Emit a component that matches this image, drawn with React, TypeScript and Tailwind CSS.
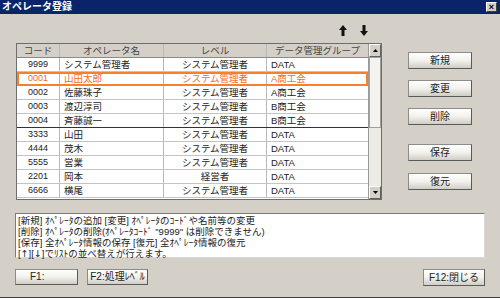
import React from "react";

type Row = { code: string; name: string; level: string; group: string };

const rows: Row[] = [
  { code: "9999", name: "システム管理者", level: "システム管理者", group: "DATA" },
  { code: "0001", name: "山田太郎", level: "システム管理者", group: "A商工会" },
  { code: "0002", name: "佐藤珠子", level: "システム管理者", group: "A商工会" },
  { code: "0003", name: "渡辺淳司", level: "システム管理者", group: "B商工会" },
  { code: "0004", name: "斉藤誠一", level: "システム管理者", group: "B商工会" },
  { code: "3333", name: "山田", level: "システム管理者", group: "DATA" },
  { code: "4444", name: "茂木", level: "システム管理者", group: "DATA" },
  { code: "5555", name: "営業", level: "システム管理者", group: "DATA" },
  { code: "2201", name: "岡本", level: "経営者", group: "DATA" },
  { code: "6666", name: "横尾", level: "システム管理者", group: "DATA" },
];

const font = {
  fontFamily: '"Liberation Sans", "Noto Sans CJK JP", sans-serif',
};

function Btn({ label, className = "" }: { label: string; className?: string }) {
  return (
    <div
      className={
        "flex items-center justify-center whitespace-nowrap leading-none border border-[#8c8c8c] border-b-[#5a5a5a] border-r-[#5a5a5a] bg-gradient-to-b from-white via-[#f2f1ec] to-[#cfcdc5] text-[10px] text-[#222] " +
        className
      }
    >
      {label}
    </div>
  );
}

function Arrow({ down = false }: { down?: boolean }) {
  return (
    <svg width="8" height="11" viewBox="0 0 8 11" className={down ? "rotate-180" : ""}>
      <path d="M4 0 L8 5 L5.5 5 L5.5 11 L2.5 11 L2.5 5 L0 5 Z" fill="#111" />
    </svg>
  );
}

function Cell({ w, align, children, className = "" }: { w: string; align: "c" | "l"; children: React.ReactNode; className?: string }) {
  return (
    <div
      className={
        w +
        " h-full flex items-center overflow-hidden whitespace-nowrap leading-none border-r border-[#b8b8b8] " +
        (align === "c" ? "justify-center" : "justify-start pl-[3px]") +
        " " +
        className
      }
    >
      {children}
    </div>
  );
}

export default function App() {
  return (
    <div className="w-[500px] h-[298px] bg-[#d4d0c8] flex flex-col border-b border-[#404040]" style={font}>
      {/* title bar */}
      <div className="h-[14px] bg-[#0a246a] flex items-center justify-between pl-[2px] pr-[3px]">
        <span className="text-white text-[10px] font-bold leading-none">オペレータ登録</span>
        <div className="w-[11px] h-[10px] bg-[#d4d0c8] border border-white border-b-[#404040] border-r-[#404040] flex items-center justify-center text-[9px] leading-none font-bold text-black">
          ×
        </div>
      </div>

      {/* arrows */}
      <div className="h-[29px] flex items-center gap-[13px] pl-[339px] pt-[3px]">
        <Arrow />
        <Arrow down />
      </div>

      <div className="flex">
        {/* table */}
        <div className="ml-[16px] w-[366px] h-[157px] border border-[#6e6e6e] bg-white flex text-[9.5px] text-[#222]">
          <div className="flex-1 flex flex-col">
            <div className="h-[14px] flex bg-[#d4d0c8] border-b border-[#8a8a8a] text-[#444]">
              <Cell w="w-[43px]" align="c">コード</Cell>
              <Cell w="w-[104px]" align="c">オペレータ名</Cell>
              <Cell w="w-[103px]" align="c">レベル</Cell>
              <Cell w="flex-1" align="c" className="border-r-0">データ管理グループ</Cell>
            </div>
            {rows.map((r, i) => {
              const sel = i === 1;
              const sep = i === 4;
              return (
                <div
                  key={r.code}
                  className={
                    "h-[14px] flex border-b " +
                    (sep ? "border-[#333]" : "border-[#c4c4c4]") +
                    (sel ? " text-[#f26b1d] outline-2 -outline-offset-2 outline-[#f5822a]" : "")
                  }
                >
                  <Cell w="w-[43px]" align="c" className="text-[9px]">{r.code}</Cell>
                  <Cell w="w-[104px]" align="l" className="pl-[4px]">{r.name}</Cell>
                  <Cell w="w-[103px]" align="c">{r.level}</Cell>
                  <Cell w="flex-1" align="l" className="border-r-0 pl-[4px]">{r.group}</Cell>
                </div>
              );
            })}
          </div>
          {/* scrollbar */}
          <div className="w-[13px] flex flex-col bg-[#ecebe6] border-l border-[#9a9a9a]">
            <div className="h-[13px] bg-[#d4d0c8] border border-white border-b-[#606060] border-r-[#606060] flex items-center justify-center">
              <svg width="5" height="3" viewBox="0 0 5 3"><path d="M2.5 0 L5 3 L0 3 Z" fill="#000" /></svg>
            </div>
            <div className="h-[71px] bg-[#f4f3ef] border border-[#a0a0a0]" />
            <div className="flex-1" />
            <div className="h-[13px] bg-[#d4d0c8] border border-white border-b-[#606060] border-r-[#606060] flex items-center justify-center">
              <svg width="5" height="3" viewBox="0 0 5 3"><path d="M0 0 L5 0 L2.5 3 Z" fill="#000" /></svg>
            </div>
          </div>
        </div>

        {/* right buttons */}
        <div className="ml-[26px] flex flex-col pt-[9px]">
          <Btn label="新規" className="w-[64px] h-[17px]" />
          <Btn label="変更" className="w-[64px] h-[17px] mt-[11px]" />
          <Btn label="削除" className="w-[64px] h-[17px] mt-[11px]" />
          <Btn label="保存" className="w-[64px] h-[17px] mt-[19px]" />
          <Btn label="復元" className="w-[64px] h-[17px] mt-[12px]" />
        </div>
      </div>

      {/* help box */}
      <div className="ml-[15px] mt-[13px] w-[470px] h-[45px] bg-white border border-[#7a7a7a] border-r-[#d8d8d8] border-b-[#d8d8d8] pl-[2px] pt-[1px] text-[9.5px] text-[#222] whitespace-nowrap">
        <div className="h-[11px] leading-[11px]">[新規] ｵﾍﾟﾚｰﾀの追加 [変更] ｵﾍﾟﾚｰﾀのｺｰﾄﾞや名前等の変更</div>
        <div className="h-[11px] leading-[11px]">[削除] ｵﾍﾟﾚｰﾀの削除(ｵﾍﾟﾚｰﾀｺｰﾄﾞ "9999" は削除できません)</div>
        <div className="h-[11px] leading-[11px]">[保存] 全ｵﾍﾟﾚｰﾀ情報の保存 [復元] 全ｵﾍﾟﾚｰﾀ情報の復元</div>
        <div className="h-[11px] leading-[11px]">
          [<span className="font-['DejaVu_Sans'] leading-[11px]">↑</span>][<span className="font-['DejaVu_Sans'] leading-[11px]">↓</span>]でﾘｽﾄの並べ替えが行えます。
        </div>
      </div>

      {/* bottom buttons */}
      <div className="mt-[11px] flex ml-[15px] mr-[15px]">
        <Btn label="F1:" className="w-[63px] h-[16px] justify-start pl-[14px]" />
        <Btn label="F2:処理ﾚﾍﾞﾙ" className="w-[61px] h-[16px] ml-[9px]" />
        <div className="flex-1" />
        <Btn label="F12:閉じる" className="w-[62px] h-[17px]" />
      </div>
    </div>
  );
}
